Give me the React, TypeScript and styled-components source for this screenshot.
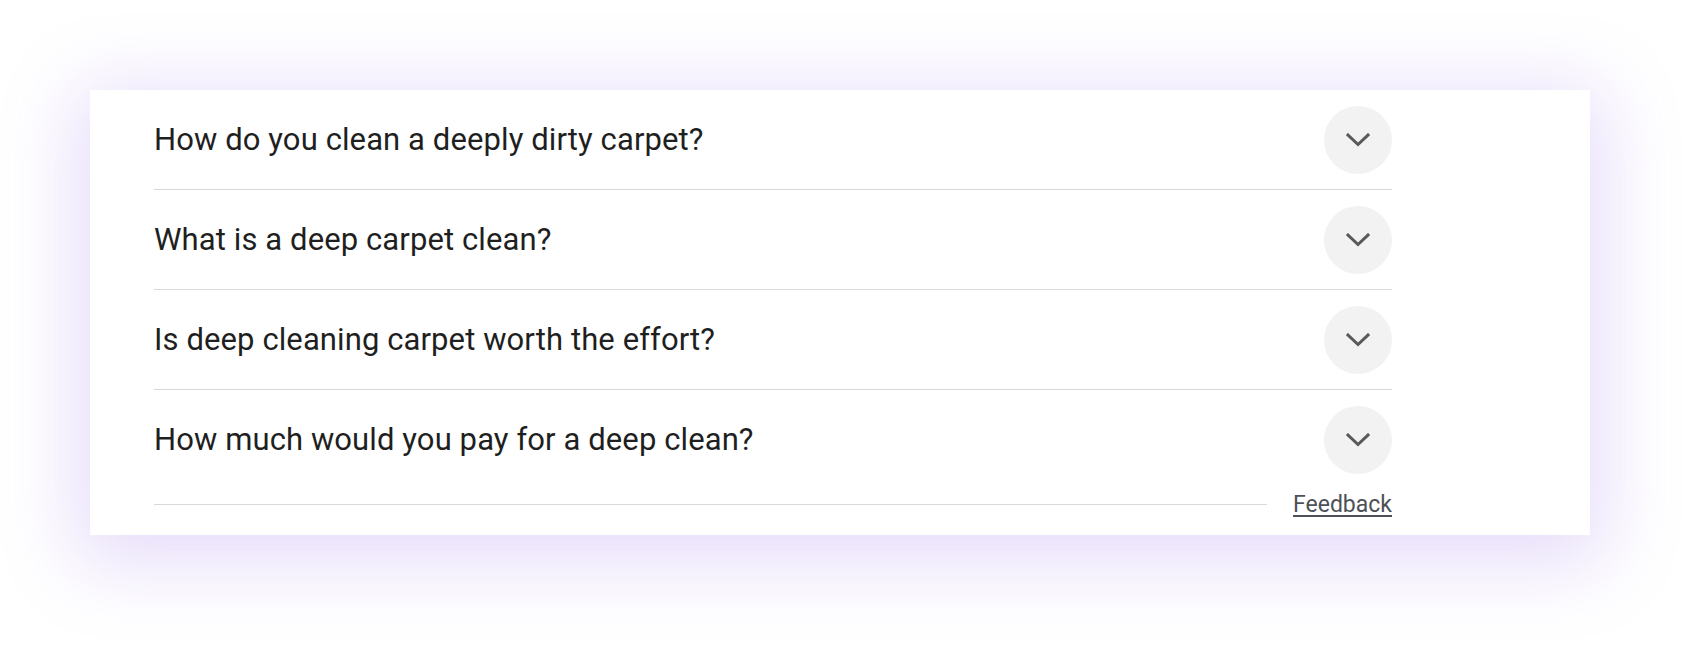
import React from 'react';
import styled, { createGlobalStyle } from 'styled-components';

const GlobalStyle = createGlobalStyle`
  html, body {
    margin: 0;
    padding: 0;
    background: #ffffff;
  }
  body {
    font-family: Roboto, 'Noto Sans', Arial, sans-serif;
  }
`;

const Page = styled.div`
  width: 1700px;
  height: 646px;
  padding: 90px 0 0 90px;
  box-sizing: border-box;
  overflow: hidden;
`;

const Card = styled.section`
  width: 1500px;
  height: 445px;
  box-sizing: border-box;
  background: #ffffff;
  padding: 0 198px 0 64px;
  box-shadow: 0 14px 72px 14px rgba(150, 110, 235, 0.24);
  display: flex;
  flex-direction: column;
`;

const Row = styled.div<{ $divider: boolean }>`
  height: 99px;
  display: flex;
  align-items: center;
  justify-content: space-between;
  border-bottom: ${({ $divider }) => ($divider ? '1px solid #d9d9d9' : 'none')};
  cursor: pointer;
`;

const Question = styled.span`
  font-family: Roboto, 'Noto Sans', Arial, sans-serif;
  font-size: 31px;
  color: #1f1f1f;
  letter-spacing: 0.1px;
`;

const ToggleButton = styled.div`
  width: 68px;
  height: 68px;
  border-radius: 50%;
  background: #f2f2f2;
  display: grid;
  place-items: center;
  flex-shrink: 0;
`;

const Footer = styled.div`
  height: 30px;
  display: flex;
  align-items: center;
  gap: 26px;
`;

const FooterLine = styled.div`
  flex: 1;
  height: 1px;
  background: #d9d9d9;
`;

const FeedbackLink = styled.a`
  font-family: Roboto, 'Noto Sans', Arial, sans-serif;
  font-size: 23px;
  color: #4d5156;
  text-decoration: underline;
  text-underline-offset: 3px;
  cursor: pointer;
`;

const Chevron = () => (
  <svg width="24" height="14" viewBox="0 0 24 14">
    <polyline
      points="2,2 12,11.5 22,2"
      fill="none"
      stroke="#595959"
      strokeWidth="3"
      strokeLinecap="square"
    />
  </svg>
);

const questions = [
  'How do you clean a deeply dirty carpet?',
  'What is a deep carpet clean?',
  'Is deep cleaning carpet worth the effort?',
  'How much would you pay for a deep clean?',
];

const App: React.FC = () => (
  <>
    <GlobalStyle />
    <Page>
      <Card>
        {questions.map((q, i) => (
          <Row key={q} $divider={i < questions.length - 1}>
            <Question>{q}</Question>
            <ToggleButton>
              <Chevron />
            </ToggleButton>
          </Row>
        ))}
        <Footer>
          <FooterLine />
          <FeedbackLink>Feedback</FeedbackLink>
        </Footer>
      </Card>
    </Page>
  </>
);

export default App;
